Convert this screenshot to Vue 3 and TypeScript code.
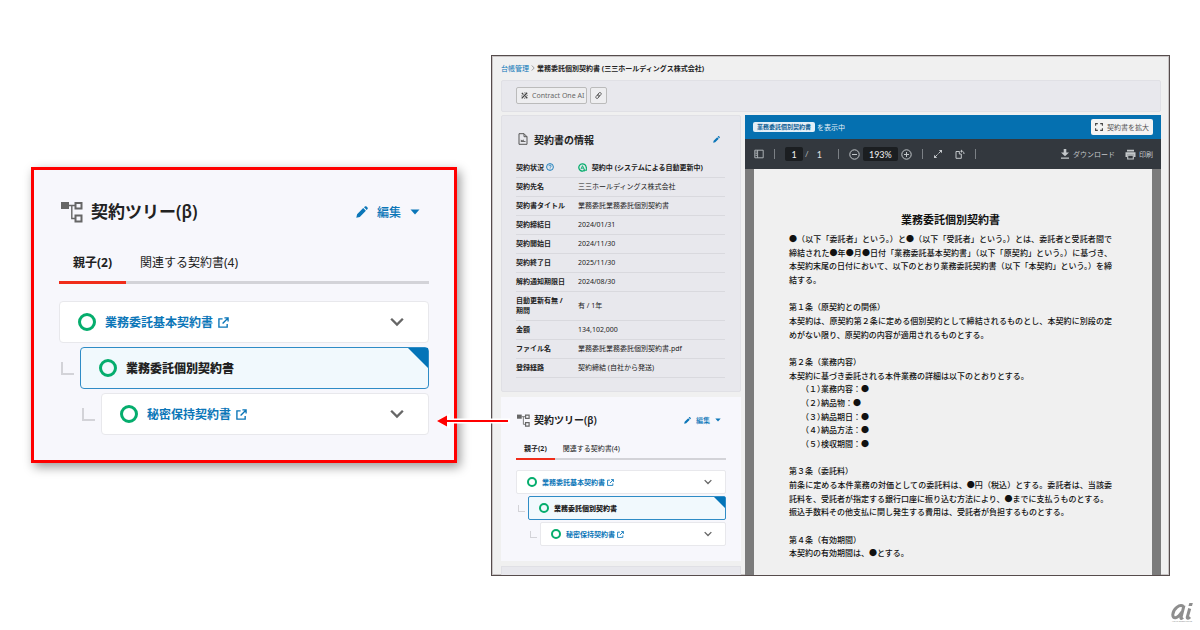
<script setup lang="ts">
interface TreeItem {
  name: string
  level: number
  current: boolean
}

interface InfoRow {
  label: string
  value: string
}

interface Section {
  heading: string
  paragraphs: string[]
  items: { no: string; text: string }[]
}

const treeItems: TreeItem[] = [
  { name: '業務委託基本契約書', level: 0, current: false },
  { name: '業務委託個別契約書', level: 1, current: true },
  { name: '秘密保持契約書', level: 2, current: false },
]

const infoRows: InfoRow[] = [
  { label: '契約先名', value: '三三ホールディングス株式会社' },
  { label: '契約書タイトル', value: '業務委託業務委託個別契約書' },
  { label: '契約締結日', value: '2024/01/31' },
  { label: '契約開始日', value: '2024/11/30' },
  { label: '契約終了日', value: '2025/11/30' },
  { label: '解約通知期限日', value: '2024/08/30' },
  { label: '自動更新有無 / 期間', value: '有 / 1年' },
  { label: '金額', value: '134,102,000' },
  { label: 'ファイル名', value: '業務委託業務委託個別契約書.pdf' },
  { label: '登録経路', value: '契約締結 (自社から発送)' },
]

const sections: Section[] = [
  {
    heading: '第１条（原契約との関係）',
    paragraphs: [
      '本契約は、原契約第２条に定める個別契約として締結されるものとし、本契約に別段の定めがない限り、原契約の内容が適用されるものとする。',
    ],
    items: [],
  },
  {
    heading: '第２条（業務内容）',
    paragraphs: ['本契約に基づき委託される本件業務の詳細は以下のとおりとする。'],
    items: [
      { no: '（１）', text: '業務内容：●' },
      { no: '（２）', text: '納品物：●' },
      { no: '（３）', text: '納品期日：●' },
      { no: '（４）', text: '納品方法：●' },
      { no: '（５）', text: '検収期間：●' },
    ],
  },
  {
    heading: '第３条（委託料）',
    paragraphs: [
      '前条に定める本件業務の対価としての委託料は、●円（税込）とする。委託者は、当該委託料を、受託者が指定する銀行口座に振り込む方法により、●までに支払うものとする。',
      '振込手数料その他支払に関し発生する費用は、受託者が負担するものとする。',
    ],
    items: [],
  },
  {
    heading: '第４条（有効期間）',
    paragraphs: ['本契約の有効期間は、●とする。'],
    items: [],
  },
]
</script>

<template>
  <div class="page">
    <svg class="defs" aria-hidden="true">
      <symbol id="i-tree" viewBox="0 0 22 22">
        <path d="M0 1h8v7H0z" fill="currentColor" />
        <path d="M14.500 2h6v5.500h-6zM14.500 14.500h6V20.500h-6z" fill="none" stroke="currentColor" stroke-width="2" />
        <path d="M8 4.500h6M10.800 4.500V17.500H14" fill="none" stroke="currentColor" stroke-width="1.400" />
      </symbol>
      <symbol id="i-pencil" viewBox="0 0 12 12">
        <path d="M0.300 11.700 1.100 8.200 7.200 2.100 9.900 4.800 3.800 10.900zM8 1.300 8.900.5c.5-.5 1.100-.5 1.600 0l1 1c.5.5.5 1.100 0 1.600L10.700 4z" fill="currentColor" />
      </symbol>
      <symbol id="i-caret" viewBox="0 0 10 6">
        <path d="M0.500 0.500h9L5 5.500z" fill="currentColor" />
      </symbol>
      <symbol id="i-external" viewBox="0 0 12 12">
        <path d="M5 2H1v9h9V7.500M7 1h4v4M11 1 5 7" fill="none" stroke="currentColor" stroke-width="1.500" />
      </symbol>
      <symbol id="i-chevron" viewBox="0 0 12 8">
        <path d="M1 1.200 6 6.200 11 1.200" fill="none" stroke="currentColor" stroke-width="2" />
      </symbol>
    </svg>

    <section class="callout tree tree--large" aria-label="契約ツリー 拡大">
      <header class="tree-head">
        <svg class="tree-icon"><use href="#i-tree" /></svg>
        <h2>契約ツリー(β)</h2>
        <button type="button" class="edit">
          <svg class="pencil"><use href="#i-pencil" /></svg>
          <span>編集</span>
          <svg class="caret"><use href="#i-caret" /></svg>
        </button>
      </header>
      <nav class="tabs">
        <button type="button" class="tab tab--on">親子(2)</button>
        <button type="button" class="tab">関連する契約書(4)</button>
      </nav>
      <ul class="nodes">
        <li v-for="item in treeItems" :key="item.name" :class="['node', 'node--' + item.level]">
          <i v-if="item.level > 0" class="elbow"></i>
          <div :class="['node-card', { 'node-card--current': item.current }]">
            <i class="ring"></i>
            <strong v-if="item.current">{{ item.name }}</strong>
            <a v-else href="#">{{ item.name }}<svg class="external"><use href="#i-external" /></svg></a>
            <button v-if="!item.current" type="button" class="toggle" aria-label="開く">
              <svg class="chevron"><use href="#i-chevron" /></svg>
            </button>
          </div>
        </li>
      </ul>
    </section>

    <main class="window">
      <nav class="crumbs">
        <a href="#">台帳管理</a>
        <svg class="crumb-sep" viewBox="0 0 4 6"><path d="M.8.5 3.200 3 .8 5.500" fill="none" stroke="#888" stroke-width=".8" /></svg>
        <strong>業務委託個別契約書 (三三ホールディングス株式会社)</strong>
      </nav>

      <div class="actions">
        <button type="button" class="action">
          <svg class="ai-icon" viewBox="0 0 10 10">
            <path d="M1 9.200 8.800 1M6.200 6l2.800 3M1.200 1.200l2.300 2.600" fill="none" stroke="#444" stroke-width="1.800" />
            <path d="M4.800 1.200h1.600M.5 5.600h1.600M8 4.800h1.600M4.400 8.900H6" stroke="#666" stroke-width="1.400" />
          </svg>
          Contract One AI
        </button>
        <button type="button" class="action action--link" aria-label="リンク">
          <svg class="link-icon" viewBox="0 0 10 10">
            <g fill="none" stroke="#555" stroke-width="1.200" transform="rotate(-50 5 5)">
              <rect x="0" y="3.200" width="6" height="3.600" rx="1.800" />
              <rect x="4" y="3.200" width="6" height="3.600" rx="1.800" />
            </g>
          </svg>
        </button>
      </div>

      <div class="columns">
        <div class="side">
          <section class="info">
            <header class="info-head">
              <svg class="file-icon" viewBox="0 0 10 12">
                <path d="M1 .7h5L9 3.700V11.300H1zM6 .7v3h3" fill="none" stroke="#555" stroke-width="1" />
                <path d="M2.800 9V6.500l1.500 1 1-1.200L6 8h1.500v1z" fill="#666" />
              </svg>
              <h2>契約書の情報</h2>
              <button type="button" class="edit" aria-label="編集">
                <svg class="pencil"><use href="#i-pencil" /></svg>
              </button>
            </header>
            <table>
              <tbody>
                <tr>
                  <th scope="row">
                    契約状況
                    <svg class="help" viewBox="0 0 8 8">
                      <circle cx="4" cy="4" r="3.400" fill="none" stroke="#0b76b8" stroke-width=".9" />
                      <path d="M2.900 3.200c0-1.500 2.300-1.400 2.300-.1 0 .8-1.100.8-1.100 1.700M4.050 5.500v.8" fill="none" stroke="#0b76b8" stroke-width=".8" />
                    </svg>
                  </th>
                  <td class="status">
                    <svg class="auto" viewBox="0 0 10 10">
                      <path d="M6.200 8.900A4.100 4.100 0 1 1 9.100 5" fill="none" stroke="#05ad6d" stroke-width="1.400" />
                      <path d="M3.300 6.800 5 3l1.700 3.800M3.900 5.700h2.200" fill="none" stroke="#05ad6d" stroke-width="1" />
                      <path d="M9.300 4.500V8H6.500" fill="none" stroke="#05ad6d" stroke-width="1.200" />
                      <path d="M7.400 6.200V9.800L5.300 8z" fill="#05ad6d" />
                    </svg>
                    契約中 (システムによる自動更新中)
                  </td>
                </tr>
                <tr v-for="row in infoRows" :key="row.label">
                  <th scope="row">{{ row.label }}</th>
                  <td>{{ row.value }}</td>
                </tr>
              </tbody>
            </table>
          </section>

          <section class="panel tree tree--small">
            <svg class="arrow" viewBox="0 0 74 16">
              <path d="M8 8H74" stroke="#fff" stroke-width="5" />
              <path d="M0 8 14 0V16z" fill="#fff" />
              <path d="M11 8H72" stroke="#f00" stroke-width="2" />
              <path d="M1 8 11 2.500V13.500z" fill="#f00" />
            </svg>
            <header class="tree-head">
              <svg class="tree-icon"><use href="#i-tree" /></svg>
              <h2>契約ツリー(β)</h2>
              <button type="button" class="edit">
                <svg class="pencil"><use href="#i-pencil" /></svg>
                <span>編集</span>
                <svg class="caret"><use href="#i-caret" /></svg>
              </button>
            </header>
            <nav class="tabs">
              <button type="button" class="tab tab--on">親子(2)</button>
              <button type="button" class="tab">関連する契約書(4)</button>
            </nav>
            <ul class="nodes">
              <li v-for="item in treeItems" :key="item.name" :class="['node', 'node--' + item.level]">
                <i v-if="item.level > 0" class="elbow"></i>
                <div :class="['node-card', { 'node-card--current': item.current }]">
                  <i class="ring"></i>
                  <strong v-if="item.current">{{ item.name }}</strong>
                  <a v-else href="#">{{ item.name }}<svg class="external"><use href="#i-external" /></svg></a>
                  <button v-if="!item.current" type="button" class="toggle" aria-label="開く">
                    <svg class="chevron"><use href="#i-chevron" /></svg>
                  </button>
                </div>
              </li>
            </ul>
          </section>

          <div class="next-panel"></div>
        </div>

        <section class="viewer">
          <header class="viewer-head">
            <span class="badge">業務委託個別契約書</span>
            <span>を表示中</span>
            <button type="button" class="expand">
              <svg class="expand-icon" viewBox="0 0 8 8">
                <path d="M.6 2.800V.6H2.800M5.200.6H7.400V2.800M7.400 5.200V7.400H5.200M2.800 7.400H.6V5.200" fill="none" stroke="#444" stroke-width="1.100" />
              </svg>
              契約書を拡大
            </button>
          </header>

          <div class="toolbar">
            <button type="button" class="tool" aria-label="サイドバー">
              <svg class="t10" viewBox="0 0 10 10"><path d="M.8 1.200H9.200V8.800H.8zM3.600 1.200V8.800M1.500 3h1.400M1.500 4.700h1.400M1.500 6.400h1.400" fill="none" stroke="#b9bdc1" stroke-width=".9" /></svg>
            </button>
            <i class="bar"></i>
            <input class="page-no" type="text" value="1" aria-label="ページ" />
            <span class="slash">/</span>
            <span class="total">1</span>
            <i class="bar bar--count"></i>
            <button type="button" class="tool" aria-label="縮小">
              <svg class="t11" viewBox="0 0 11 11"><circle cx="5.500" cy="5.500" r="4.700" fill="none" stroke="#c3c7ca" /><path d="M3 5.500h5" stroke="#c3c7ca" /></svg>
            </button>
            <input class="zoom" type="text" value="193%" aria-label="倍率" />
            <button type="button" class="tool" aria-label="拡大">
              <svg class="t11" viewBox="0 0 11 11"><circle cx="5.500" cy="5.500" r="4.700" fill="none" stroke="#c3c7ca" /><path d="M3 5.500h5M5.500 3v5" stroke="#c3c7ca" /></svg>
            </button>
            <i class="bar"></i>
            <button type="button" class="tool" aria-label="全体表示">
              <svg class="t10" viewBox="0 0 10 10"><path d="M2 8 8 2" stroke="#c3c7ca" stroke-dasharray="3.600 1.300" /><path d="M5.800 1H9V4.200zM1 5.800V9H4.200z" fill="#c3c7ca" /></svg>
            </button>
            <button type="button" class="tool tool--rotate" aria-label="回転">
              <svg class="t10" viewBox="0 0 10 10"><path d="M4.500 2.500H1V9.300H6.300V5H4.300V2.500M6.300 2.200C8 2 9 3 9 5" fill="none" stroke="#c3c7ca" stroke-width="1" /><path d="M7 .5V4L5.200 2.200z" fill="#c3c7ca" /></svg>
            </button>
            <i class="bar"></i>
            <button type="button" class="tool tool--text">
              <svg class="t10" viewBox="0 0 10 10"><path d="M3.700 0H6.300V3.500H9L5 7.300 1 3.500H3.700zM1 8.500H9V9.800H1z" fill="#c3c7ca" /></svg>
              ダウンロード
            </button>
            <button type="button" class="tool tool--print">
              <svg class="t11" viewBox="0 0 11 11"><path d="M2 .8H9V2.600H2zM.5 3.200h10V8H9V5.800H2V8H.5z" fill="#c3c7ca" /><path d="M2.700 6.300H8.300V10H2.700z" fill="none" stroke="#c3c7ca" stroke-width="1.100" /></svg>
              印刷
            </button>
          </div>

          <div class="canvas">
            <article class="sheet">
              <h1>業務委託個別契約書</h1>
              <p>●（以下「委託者」という。）と●（以下「受託者」という。）とは、委託者と受託者間で締結された●年●月●日付「業務委託基本契約書」（以下「原契約」という。）に基づき、本契約末尾の日付において、以下のとおり業務委託契約書（以下「本契約」という。）を締結する。</p>
              <section v-for="s in sections" :key="s.heading">
                <h3>{{ s.heading }}</h3>
                <p v-for="p in s.paragraphs" :key="p">{{ p }}</p>
                <ul v-if="s.items.length">
                  <li v-for="it in s.items" :key="it.no"><span class="no">{{ it.no }}</span>{{ it.text }}</li>
                </ul>
              </section>
            </article>
          </div>
        </section>
      </div>
    </main>

    <footer class="brand" aria-label="ai ASAHI INTERACTIVE">
      <svg class="brand-mark" viewBox="0 0 22 17">
        <path d="M13 2.500 10 14.500C9.700 15.900 10.500 15.600 12 14.500M12.300 3.200C8.500.8 2.200 5.800 1.800 11.500 1.600 16.500 6.500 16 10.800 9M18.700 5.500 16.300 14C16 15.800 17.500 15.500 19 14" fill="none" stroke="#8e8e8e" stroke-width="3" />
        <path d="M18.300 0H21.800L21 3H17.500z" fill="#8e8e8e" />
      </svg>
      <small>ASAHI INTERACTIVE</small>
    </footer>
  </div>
</template>

<style>
body {
  background: #fff;
}
</style>

<style scoped>
.page {
  position: relative;
  box-sizing: border-box;
  min-height: 100vh;
  display: grid;
  grid-template-columns: 426fr 679fr;
  gap: 34px;
  align-items: start;
  padding: 55px 30px 54px 31px;
  color: #222;
  font-family: "Noto Sans", "Noto Sans CJK JP", sans-serif;
}
.defs {
  position: absolute;
  width: 0;
  height: 0;
}
svg {
  display: block;
  flex: none;
}
button {
  display: flex;
  align-items: center;
  border: 0;
  padding: 0;
  background: none;
  color: inherit;
  font: inherit;
  cursor: pointer;
}
a {
  color: #0b76b8;
  text-decoration: none;
}
h1, h2, h3, p, ul {
  margin: 0;
  padding: 0;
}
ul {
  list-style: none;
}

/* contract tree, in two sizes */
.tree {
  box-sizing: border-box;
  background: #f7f7fc;
}
.tree--large {
  --icon: 22px;
  --title: 17px;
  --text: 12px;
  --head-gap: 8px;
  --edit-gap: 9px;
  --pencil: 12px;
  --caret: 10px;
  --edit-pad: 9px;
  --tab-h: 58px;
  --tab-top: 18px;
  --tab-pad: 14px;
  --line: 3px;
  --nodes-top: 17px;
  --node-gap: 4px;
  --card-h: 42px;
  --card-pad: 18px;
  --card-pad-r: 24px;
  --indent: 21px;
  --ring: 18px;
  --ring-w: 3px;
  --ring-gap: 9px;
  --ext-gap: 5px;
  --ext: 11px;
  --chev: 14px;
  --elbow: 13px;
  --elbow-w: 2px;
  --elbow-r: 6px;
  --fold: 20px;
  --radius: 4px;
}
.tree--small {
  --icon: 13px;
  --title: 10px;
  --text: 7px;
  --head-gap: 4px;
  --edit-gap: 5px;
  --pencil: 7px;
  --caret: 6px;
  --edit-pad: 5px;
  --tab-h: 26px;
  --tab-top: 5px;
  --tab-pad: 8px;
  --line: 2px;
  --nodes-top: 10px;
  --node-gap: 2px;
  --card-h: 24px;
  --card-pad: 10px;
  --card-pad-r: 13px;
  --indent: 12px;
  --ring: 10px;
  --ring-w: 2px;
  --ring-gap: 5px;
  --ext-gap: 2px;
  --ext: 7px;
  --chev: 8px;
  --elbow: 7px;
  --elbow-w: 1px;
  --elbow-r: 3px;
  --fold: 11px;
  --radius: 2px;
}
.callout {
  margin-top: 112px;
  padding: 28px 25px 25px;
  border: 3px solid #f00;
  box-shadow: 3px 4px 10px rgba(0, 0, 0, 0.4);
}
.tree-head {
  display: flex;
  align-items: center;
  gap: var(--head-gap);
}
.tree-icon {
  width: var(--icon);
  height: var(--icon);
  margin-left: 2px;
  color: #666;
}
.tree-head h2 {
  font-size: var(--title);
  line-height: 28px;
  font-weight: 600;
}
.edit {
  margin-left: auto;
  gap: var(--edit-gap);
  padding-right: var(--edit-pad);
  color: #0b76b8;
  font-size: var(--text);
  font-weight: 500;
}
.pencil {
  width: var(--pencil);
  height: var(--pencil);
}
.caret {
  width: var(--caret);
  height: var(--caret);
}
.tabs {
  display: flex;
  box-shadow: inset 0 calc(0px - var(--line)) #d3d3d8;
}
.tab {
  box-sizing: border-box;
  height: var(--tab-h);
  padding: var(--tab-top) var(--tab-pad) 0;
  border-bottom: var(--line) solid transparent;
  font-size: var(--text);
  line-height: 16px;
}
.tab--on {
  border-bottom-color: #f02c1a;
  font-weight: 700;
}
.nodes {
  display: grid;
  gap: var(--node-gap);
  margin-top: var(--nodes-top);
}
.node {
  display: flex;
  align-items: center;
}
.node--2 {
  padding-left: var(--indent);
}
.elbow {
  box-sizing: border-box;
  flex: none;
  width: var(--elbow);
  height: var(--elbow);
  margin: 0 var(--elbow-r) 0 2px;
  border: solid #d3d3d8;
  border-width: 0 0 var(--elbow-w) var(--elbow-w);
}
.node-card {
  position: relative;
  box-sizing: border-box;
  flex: 1;
  display: flex;
  align-items: center;
  gap: var(--ring-gap);
  height: var(--card-h);
  padding: 0 var(--card-pad-r) 0 var(--card-pad);
  border: 1px solid #e8e8ec;
  border-radius: var(--radius);
  background: #fff;
  font-size: var(--text);
  font-weight: 700;
}
.node-card--current {
  border-color: #2f8cc6;
  background: #f1f9fd;
}
.node-card--current::after {
  content: "";
  position: absolute;
  top: 0;
  right: 0;
  width: var(--fold);
  height: var(--fold);
  background: #0474b8;
  clip-path: polygon(0 0, 100% 0, 100% 100%);
}
.node-card a {
  display: flex;
  align-items: center;
  gap: var(--ext-gap);
}
.ring {
  box-sizing: border-box;
  flex: none;
  width: var(--ring);
  height: var(--ring);
  border: var(--ring-w) solid #05ad6d;
  border-radius: 50%;
}
.external {
  width: var(--ext);
  height: var(--ext);
}
.toggle {
  margin-left: auto;
  color: #666;
}
.chevron {
  width: var(--chev);
  height: var(--chev);
}

/* application window */
.window {
  box-sizing: border-box;
  display: flex;
  flex-direction: column;
  padding: 0 8px 0 9px;
  border: 1px solid #564c4c;
  box-shadow: inset 0 0 0 1px #c9c5c5;
  background: #f0f0f0;
  font-size: 7px;
}
.crumbs {
  display: flex;
  align-items: center;
  gap: 2px;
  height: 24px;
}
.crumb-sep {
  width: 4px;
  height: 6px;
}
.actions {
  box-sizing: border-box;
  display: flex;
  align-items: center;
  gap: 3px;
  height: 32px;
  padding: 0 14px 1px;
  border: 1px solid #e0e0e5;
  border-radius: 2px;
  background: #e8e8ed;
}
.action {
  box-sizing: border-box;
  height: 17px;
  gap: 4px;
  padding: 0 2px 0 4px;
  border: 1px solid #bbb;
  border-radius: 2px;
  background: #eeeef0;
  color: #666;
}
.action--link {
  padding: 0 4px;
}
.ai-icon,
.link-icon {
  width: 7px;
  height: 7px;
}
.columns {
  flex: 1;
  display: grid;
  grid-template-columns: 240px 1fr;
  gap: 4px;
  margin-top: 3px;
}
.side {
  display: flex;
  flex-direction: column;
}
.info {
  box-sizing: border-box;
  padding: 9px 15px 13px 14px;
  border: 1px solid #e0e0e5;
  border-radius: 2px;
  background: #e8e8ed;
}
.info-head {
  display: flex;
  align-items: center;
  gap: 6px;
  height: 28px;
  margin-bottom: 6px;
}
.file-icon {
  width: 10px;
  height: 12px;
  margin-left: 2px;
}
.info-head h2 {
  font-size: 10px;
  font-weight: 700;
}
.info .edit {
  --pencil: 7px;
  --edit-pad: 5px;
}
table {
  width: 100%;
  border-collapse: collapse;
  line-height: 10px;
}
th,
td {
  padding: 4px 0;
  border-bottom: 1px solid #d9d9de;
  text-align: left;
  font-weight: 400;
}
th {
  width: 52px;
  padding-right: 10px;
  font-weight: 700;
}
th .help {
  display: inline-block;
  width: 8px;
  height: 8px;
  margin-right: -8px;
  vertical-align: -1px;
}
.status {
  font-weight: 700;
}
.auto {
  display: inline-block;
  width: 9px;
  height: 9px;
  margin-right: 3px;
  vertical-align: -2px;
}
.panel {
  position: relative;
  margin-top: 5px;
  padding: 9px 15px 15px;
}
.panel .tree-icon {
  margin-left: 1px;
}
.arrow {
  position: absolute;
  top: 16px;
  right: calc(100% - 9px);
  width: 74px;
  height: 16px;
}
.next-panel {
  flex: 1;
  min-height: 8px;
  margin-top: 5px;
  border: solid #e0e0e5;
  border-width: 1px 1px 0;
  background: #e8e8ed;
}
.viewer {
  display: flex;
  flex-direction: column;
}
.viewer-head {
  display: flex;
  align-items: center;
  gap: 2px;
  height: 24px;
  padding: 0 8px;
  background: #0570b0;
  color: #e8f1f7;
}
.badge {
  padding: 0 4px;
  border-radius: 2px;
  background: #e3eff7;
  color: #0b5c93;
  font-size: 6px;
  line-height: 10px;
  font-weight: 700;
}
.expand {
  gap: 4px;
  height: 16px;
  margin-left: auto;
  padding: 0 4px;
  border-radius: 2px;
  background: #f3f3f3;
  color: #555;
}
.expand-icon {
  width: 8px;
  height: 8px;
}
.toolbar {
  display: flex;
  align-items: center;
  height: 30px;
  padding: 0 8px 0 9px;
  background: #33383e;
  color: #c3c7ca;
  font-family: Lato, "Noto Sans CJK JP", sans-serif;
}
.tool {
  gap: 3px;
}
.bar {
  width: 1px;
  height: 10px;
  margin: 0 10px;
  background: #7b8085;
}
.toolbar input {
  box-sizing: border-box;
  height: 14px;
  padding: 0;
  border: 0;
  border-radius: 2px;
  background: #1b1e21;
  color: #f0f0f0;
  font: inherit;
  font-size: 9px;
  text-align: center;
}
.page-no {
  width: 18px;
}
.zoom {
  width: 35px;
  margin: 0 3px;
}
.slash {
  margin-left: 2px;
  font-size: 8px;
}
.total {
  margin-left: 8px;
  color: #e0e0e0;
  font-size: 9px;
}
.bar--count {
  margin-left: 16px;
}
.tool--rotate {
  margin-left: 12px;
}
.tool--text {
  margin-left: auto;
}
.tool--print {
  margin-left: 10px;
}
.t10 {
  width: 10px;
  height: 10px;
}
.t11 {
  width: 11px;
  height: 11px;
}
.canvas {
  flex: 1;
  padding: 0 9px;
  background: #7b7b7b;
}
.sheet {
  box-sizing: border-box;
  height: 100%;
  padding: 42px 40px 13px 35px;
  background: #f0f0f0;
  color: #111;
  font-family: "Noto Sans CJK JP", sans-serif;
  font-size: 8px;
  font-weight: 500;
  line-height: 1.7;
}
.sheet h1 {
  margin-bottom: 5px;
  font-size: 11px;
  line-height: 16px;
  font-weight: 700;
  text-align: center;
}
.sheet h3 {
  font-size: 8px;
  font-weight: 500;
}
.sheet p {
  text-align: justify;
}
.sheet section {
  margin-top: 14px;
}
.sheet ul {
  padding-left: 16px;
}
.no {
  font-feature-settings: "halt";
}

.brand {
  position: absolute;
  right: 7px;
  bottom: 7px;
  display: grid;
  justify-items: center;
  color: #999;
}
.brand-mark {
  width: 22px;
  height: 17px;
}
.brand small {
  font-family: "Liberation Sans", sans-serif;
  font-size: 2px;
  line-height: 3px;
  font-weight: 700;
}
</style>
